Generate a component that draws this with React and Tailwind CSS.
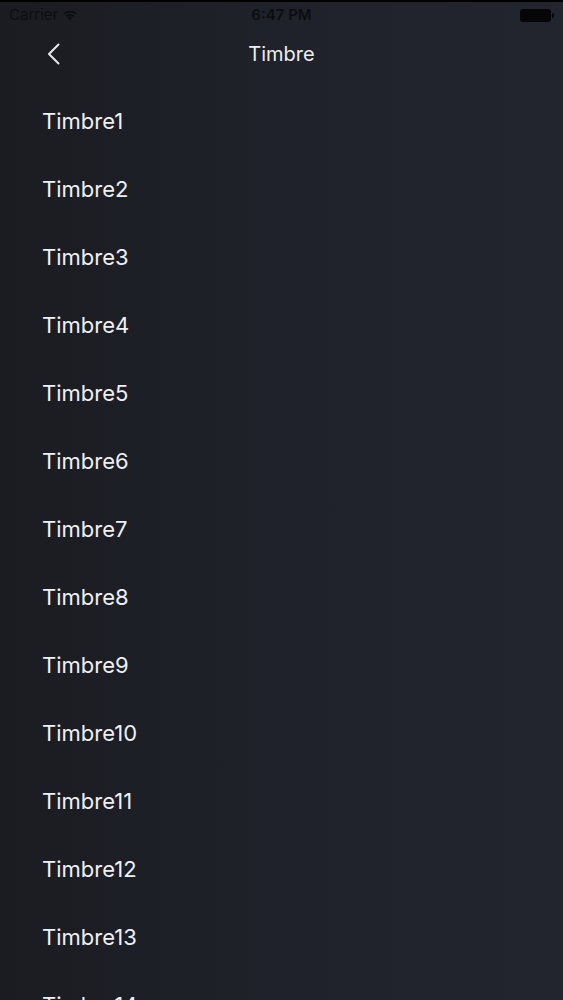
import React from "react";

const items = Array.from({ length: 14 }, (_, i) => `Timbre${i + 1}`);

const StatusBar = () => (
  <div className="relative flex h-[28px] items-center border-t-2 border-black px-[9px] text-[15px] text-[#0c0d10]">
    <div className="flex items-center gap-[4px]">
      <span>Carrier</span>
      <svg width="16" height="12" viewBox="0 0 16 12" fill="#0c0d10">
        <path d="M8 11.5 L5.6 8.6 A3.6 3.6 0 0 1 10.4 8.6 Z" />
        <path d="M3.8 6.6 A6.4 6.4 0 0 1 12.2 6.6 L11.1 7.9 A4.7 4.7 0 0 0 4.9 7.9 Z" />
        <path d="M1.6 4.2 A9.6 9.6 0 0 1 14.4 4.2 L13.3 5.5 A7.9 7.9 0 0 0 2.7 5.5 Z" />
      </svg>
    </div>
    <div className="absolute left-0 right-0 text-center font-semibold">6:47 PM</div>
    <div className="ml-auto flex items-center">
      <div className="h-[13px] w-[31px] rounded-[3px] bg-[#050608]" />
      <div className="ml-[1px] h-[5px] w-[2px] rounded-r-sm bg-[#050608]" />
    </div>
  </div>
);

const NavBar = () => (
  <div className="relative flex h-[52px] items-center">
    <button className="ml-[46px] flex h-[24px] w-[16px] items-center">
      <svg width="15" height="22" viewBox="0 0 15 22" fill="none">
        <path
          d="M12.5 1.5 L3 11 L12.5 20.5"
          stroke="#e6e7ea"
          strokeWidth="2"
          strokeLinecap="round"
          strokeLinejoin="round"
        />
      </svg>
    </button>
    <h1 className="absolute left-0 right-0 text-center text-[20px] text-[#eceef1] pointer-events-none">
      Timbre
    </h1>
  </div>
);

export default function App() {
  return (
    <div
      className="h-[1000px] w-[563px] overflow-hidden bg-gradient-to-r from-[#1a1c21] via-[#1f222a] to-[#22252e]"
      style={{ fontFamily: "Inter, 'Noto Sans', sans-serif" }}
    >
      <StatusBar />
      <NavBar />
      <ul className="pt-[7px]">
        {items.map((name) => (
          <li
            key={name}
            className="flex h-[68px] items-center pl-[42px] text-[22px] text-[#eef0f3]"
          >
            {name}
          </li>
        ))}
      </ul>
    </div>
  );
}
